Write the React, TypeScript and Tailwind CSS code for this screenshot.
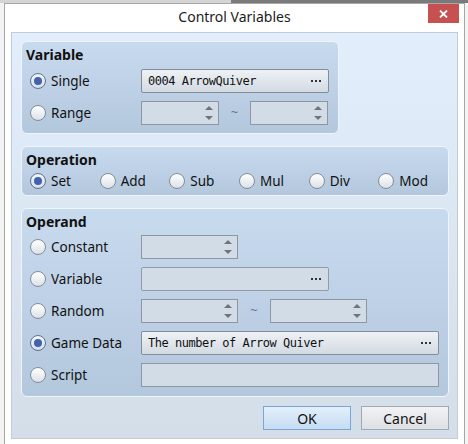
import React from "react";

// Control Variables dialog, event command editor style

const ui = "font-['Noto_Sans','DejaVu_Sans',sans-serif]";
const mono = "font-['DejaVu_Sans_Mono','Liberation_Mono',monospace]";

function Radio({ checked }: { checked?: boolean }) {
    return <span className={`flex w-4 h-4 shrink-0 items-center justify-center rounded-full border ${checked ? 'border-[#61718c] bg-[linear-gradient(#f2f7fd,#d3def0)]' : 'border-[#868c95] bg-[linear-gradient(#ffffff,#dce2e9)]'}`}>
        {checked ? <span className="w-2 h-2 rounded-full bg-[#4262ab]" /> : null}
    </span>
}

function Option(props: { label: string, checked?: boolean, className?: string }) {
    return <label className={`flex items-center gap-[5px] text-[13.5px] text-[#111] ${props.className ?? ''}`}>
        <Radio checked={props.checked} />
        <span className="select-none">{props.label}</span>
    </label>
}

function Dots() {
    return <span className="flex gap-[2px]">
        <span className="w-[2px] h-[2px] bg-[#333]" />
        <span className="w-[2px] h-[2px] bg-[#333]" />
        <span className="w-[2px] h-[2px] bg-[#333]" />
    </span>
}

// "..." picker button, enabled ones get the raised gradient
function Picker(props: { text?: string, enabled?: boolean, className?: string }) {
    return <div className={`flex h-6 items-center justify-between pl-[6px] pr-[7px] rounded-[2px] border ${props.enabled ? 'border-[#838d99] bg-[linear-gradient(#eef2f6,#d3dae2)]' : 'border-[#939ba5] bg-[#d2dce7]'} ${props.className ?? ''}`}>
        <span className={`${mono} text-[12px] tracking-[-0.47px] text-[#111] whitespace-pre`}>{props.text ?? ''}</span>
        <Dots />
    </div>
}

function Spin(props: { className?: string }) {
    return <div className={`flex h-6 items-center justify-end pr-[5px] border border-[#8e969f] bg-[#d2dce7] ${props.className ?? ''}`}>
        <span className="flex flex-col gap-[6px]">
            <svg width="8" height="4" viewBox="0 0 8 4"><path d="M0 4 L4 0 L8 4 Z" fill="#6f747b" /></svg>
            <svg width="8" height="4" viewBox="0 0 8 4"><path d="M0 0 L8 0 L4 4 Z" fill="#6f747b" /></svg>
        </span>
    </div>
}

function Tilde(props: { className?: string }) {
    return <span className={`text-center text-[13px] text-[#6b7380] ${props.className ?? ''}`}>~</span>
}

function Group(props: { title: string, className?: string, children: React.ReactNode }) {
    return <div className={`flex flex-col rounded-[6px] border border-[#eef5fd] bg-[linear-gradient(#c8daee,#b3c7dd)] pt-[3px] ${props.className ?? ''}`}>
        <div className="pl-[4px] text-[14px] leading-[19px] font-bold text-[#111]">{props.title}</div>
        {props.children}
    </div>
}

function Row(props: { label: string, checked?: boolean, children?: React.ReactNode }) {
    return <div className="flex h-6 items-center">
        <Option label={props.label} checked={props.checked} className="w-[111px]" />
        {props.children}
    </div>
}

export default function App() {
    return <div className={`${ui} relative w-[468px] h-[444px] overflow-hidden bg-[#f3f3f3]`}>
        <div className="flex h-[3px]">
            <div className="w-[231px] bg-[#d4d4d4]" />
            <div className="flex-1 bg-[#7a7a7a]" />
        </div>
        <div className="ml-[4px] w-[461px] h-[441px] flex flex-col bg-white border border-b-0 border-[#a7a7a7]">
            <div className="relative h-[28px] flex items-center justify-center pb-[3px]">
                <span className="text-[14px] text-[#1b1b1b]">Control Variables</span>
                <div className="absolute right-[5px] top-0 w-[31px] h-[19px] flex items-center justify-center bg-[#c75050]">
                    <svg width="9" height="8" viewBox="0 0 9 8">
                        <path d="M1 0.5 L8 7.5 M8 0.5 L1 7.5" stroke="#fff" strokeWidth="1.8" />
                    </svg>
                </div>
            </div>
            <div className="mx-[6px] h-[407px] flex flex-col pt-[8px] pl-[9px] pr-[8px] border border-[#c2cbd6] bg-[linear-gradient(#e2eefc,#d4dee9)]">
                <Group title="Variable" className="w-[318px] h-[93px]">
                    <div className="flex flex-col gap-2 mt-[5px] pl-[8px]">
                        <Row label="Single" checked>
                            <Picker text="0004 ArrowQuiver" enabled className="w-[188px]" />
                        </Row>
                        <Row label="Range">
                            <Spin className="w-[78px]" />
                            <Tilde className="w-[31px]" />
                            <Spin className="w-[78px]" />
                        </Row>
                    </div>
                </Group>
                <Group title="Operation" className="mt-3 h-[50px]">
                    <div className="flex mt-[2px] pl-[8px]">
                        <Option label="Set" checked className="w-[70px]" />
                        <Option label="Add" className="w-[70px]" />
                        <Option label="Sub" className="w-[70px]" />
                        <Option label="Mul" className="w-[70px]" />
                        <Option label="Div" className="w-[70px]" />
                        <Option label="Mod" className="w-[70px]" />
                    </div>
                </Group>
                <Group title="Operand" className="mt-3 h-[189px]">
                    <div className="flex flex-col gap-2 mt-[4px] pl-[8px]">
                        <Row label="Constant">
                            <Spin className="w-[97px]" />
                        </Row>
                        <Row label="Variable">
                            <Picker className="w-[188px]" />
                        </Row>
                        <Row label="Random">
                            <Spin className="w-[97px]" />
                            <Tilde className="w-[32px]" />
                            <Spin className="w-[97px]" />
                        </Row>
                        <Row label="Game Data" checked>
                            <Picker text="The number of Arrow Quiver" enabled className="w-[298px]" />
                        </Row>
                        <Row label="Script">
                            <div className="w-[298px] h-6 border border-[#8e969f] bg-[#d2dce7]" />
                        </Row>
                    </div>
                </Group>
                <div className="flex justify-end gap-[10px] mt-[9px]">
                    <button className="w-[88px] h-6 border border-[#7aa6d6] bg-[linear-gradient(#e3effb,#c6dcf3)] text-[14px] text-[#111]">OK</button>
                    <button className="w-[88px] h-6 border border-[#a3a8ae] bg-[linear-gradient(#f1f2f4,#dde0e4)] text-[14px] text-[#111]">Cancel</button>
                </div>
            </div>
        </div>
    </div>
}
